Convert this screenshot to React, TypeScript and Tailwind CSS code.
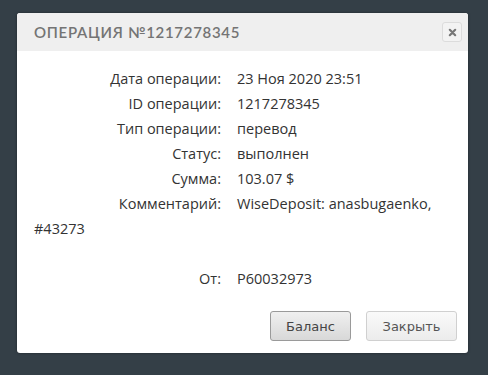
const rows: [string, string][] = [
  ['Дата операции:', '23 Ноя 2020 23:51'],
  ['ID операции:', '1217278345'],
  ['Тип операции:', 'перевод'],
  ['Статус:', 'выполнен'],
  ['Сумма:', '103.07 $'],
];

export default function App() {
  return (
    <div className="h-[375px] w-[488px] bg-[#343f47] pt-[13px] pl-[17px] font-['Open_Sans',sans-serif]">
      <div className="w-[451px] h-[340px] bg-white rounded-[3px] overflow-hidden shadow-[0_0_3px_rgba(0,0,0,0.4)] flex flex-col">
        <div className="h-[38px] bg-[#efefef] flex items-center justify-between pl-[17px] pr-[6px]">
          <span className="text-[15px] tracking-[0.7px] text-[#747474] font-['Lato',sans-serif] font-semibold">
            ОПЕРАЦИЯ №1217278345
          </span>
          <button className="w-[20px] h-[20px] rounded-[3px] border border-[#dcdcdc] bg-[#f3f3f3] flex items-center justify-center">
            <svg width="9" height="9" viewBox="0 0 10 10">
              <path d="M2 2L8 8M8 2L2 8" stroke="#777" strokeWidth="2.4" strokeLinecap="round" />
            </svg>
          </button>
        </div>
        <div className="flex-1 pl-[17px] pr-[10px] pt-[15px] text-[14.5px] leading-[25px] text-[#333]">
          {rows.map(([k, v]) => (
            <div key={k}>
              <span className="inline-block w-[188px] text-right pr-[1px]">{k}</span>
              <span className="pl-[15px]">{v}</span>
            </div>
          ))}
          <div>
            <span className="inline-block w-[188px] text-right pr-[1px]">Комментарий:</span>
            <span className="pl-[15px]">WiseDeposit: anasbugaenko, #43273</span>
          </div>
          <div className="h-[25px]" />
          <div>
            <span className="inline-block w-[188px] text-right pr-[1px]">От:</span>
            <span className="pl-[15px]">P60032973</span>
          </div>
          <div className="flex justify-end gap-[15px] mt-[20px] pr-[1px] font-['DejaVu_Sans',sans-serif] text-[13px] text-[#444]">
            <button className="w-[81px] h-[30px] rounded-[3px] border border-[#9a9a9a] bg-gradient-to-b from-[#f0f0f0] to-[#d8d8d8]">
              Баланс
            </button>
            <button className="w-[91px] h-[30px] rounded-[3px] border border-[#d0d0d0] bg-gradient-to-b from-[#fafafa] to-[#ececec] text-[#555]">
              Закрыть
            </button>
          </div>
        </div>
      </div>
    </div>
  );
}
